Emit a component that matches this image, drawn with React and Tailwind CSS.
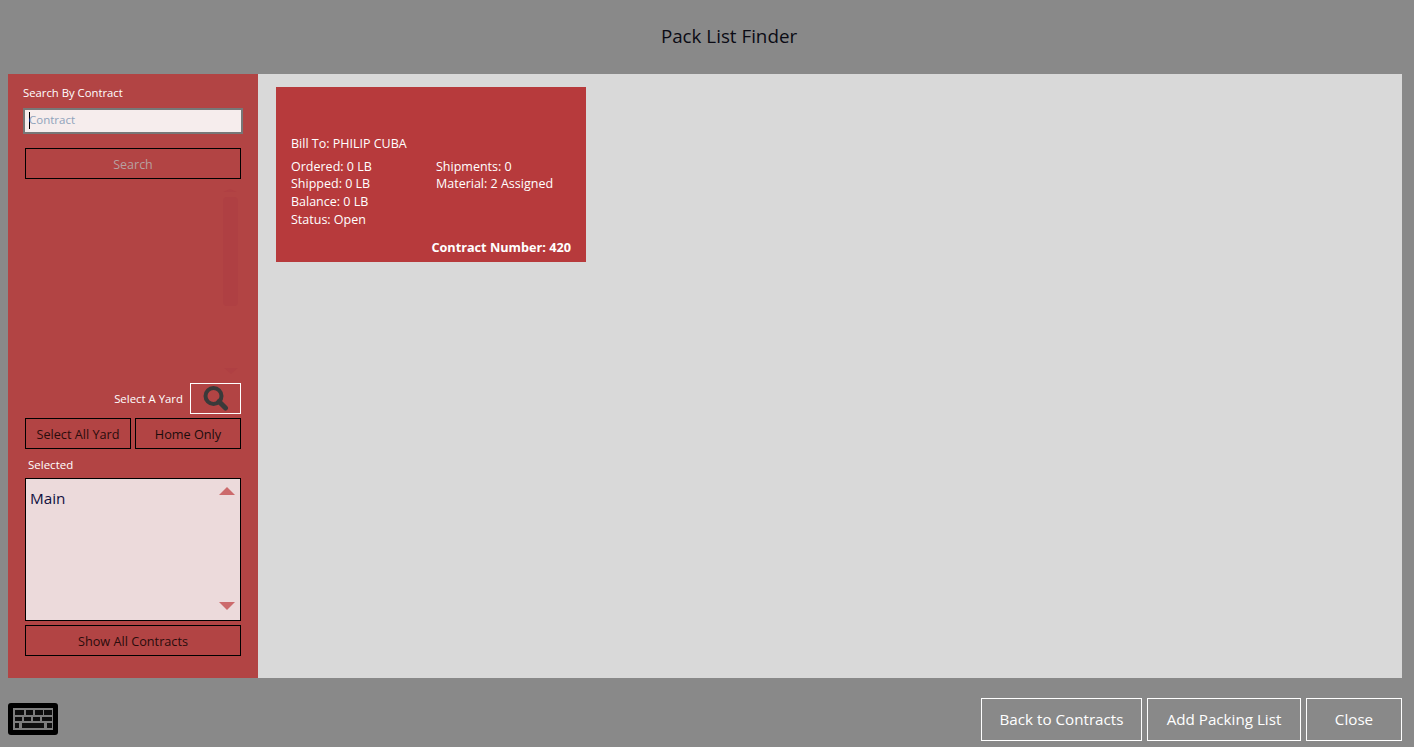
const font = { fontFamily: '"Open Sans", "Noto Sans", sans-serif' };

function Keyboard() {
  const keys = [
    [7, 7, 9, 5], [18, 7, 7, 5], [27, 7, 8, 5], [36, 7, 8, 5],
    [7, 14, 7, 4], [16, 14, 7, 4], [25, 14, 7, 4], [34, 14, 10, 4],
    [7, 20, 4, 5], [14, 20, 22, 5], [39, 20, 5, 5],
  ];
  return (
    <svg width="50" height="32" viewBox="0 0 50 32" className="block">
      <rect x="0" y="0" width="50" height="32" rx="3" fill="#000" />
      <rect x="5" y="5" width="40" height="22" fill="#7d7d7d" />
      {keys.map(([x, y, w, h], i) => (
        <rect key={i} x={x} y={y} width={w} height={h} fill="#0e0e0e" />
      ))}
    </svg>
  );
}

function Magnifier() {
  return (
    <svg width="26" height="26" viewBox="0 0 26 26" fill="none" className="block">
      <circle cx="10.5" cy="10" r="8" stroke="#3a3a3a" strokeWidth="4" />
      <path d="M16 15.5L22.5 22" stroke="#3a3a3a" strokeWidth="5" strokeLinecap="round" />
    </svg>
  );
}

export default function App() {
  return (
    <div className="w-[1414px] h-[747px] flex flex-col overflow-hidden bg-[#898989]" style={font}>
      <header className="h-[74px] shrink-0 flex items-center justify-center pl-[44px] pb-[2px] text-[18.8px] text-[#0b0b14]">
        Pack List Finder
      </header>
      <main className="h-[604px] shrink-0 flex ml-2 mr-3">
        <aside className="w-[250px] shrink-0 flex flex-col bg-[#b24444] pb-[22px]">
          <label className="block ml-[15px] mt-[10px] h-[18px] leading-[18px] text-[11.3px] text-white">Search By Contract</label>
          <div className="ml-[15px] mt-[6px] w-[220px] h-[26px] border-2 border-[#777] bg-[#f6eded] flex items-center pl-[4px] pb-[2px] text-[11.5px] text-[#8fa3bb]">
            <span className="w-px h-[17px] bg-black"></span>
            <span className="-ml-px">Contract</span>
          </div>
          <button className="ml-[17px] mt-[14px] w-[216px] h-[31px] pt-1 border border-black text-[12.5px] text-[#b8a0a0]">Search</button>
          <div className="flex-1 relative">
            <span className="absolute left-[215px] top-[10px] w-0 h-0 border-x-[7px] border-x-transparent border-b-[3px] border-b-[#af4043]"></span>
            <div className="absolute left-[215px] top-[18px] w-[15px] h-[109px] rounded bg-[#af4043]"></div>
            <span className="absolute left-[216px] top-[189px] w-0 h-0 border-x-[7px] border-x-transparent border-t-[6px] border-t-[#af4043]"></span>
          </div>
          <div className="flex items-center justify-end mr-[17px] h-[31px]">
            <span className="text-[11.4px] text-white mr-[7px]">Select A Yard</span>
            <button className="w-[51px] h-[31px] border border-white flex items-center justify-center">
              <Magnifier />
            </button>
          </div>
          <div className="flex ml-[17px] mt-[4px] w-[216px] gap-[4px]">
            <button className="w-[106px] h-[31px] pt-[2px] border border-black text-[12.7px] text-[#2a0c0c] whitespace-nowrap overflow-hidden">Select All Yard</button>
            <button className="w-[106px] h-[31px] pt-[2px] border border-black text-[12.7px] text-[#1a0c0c]">Home Only</button>
          </div>
          <div className="ml-[20px] mt-[8px] h-[15px] leading-[15px] text-[11.5px] text-white">Selected</div>
          <div className="ml-[17px] mt-[6px] w-[216px] h-[143px] border border-black bg-[#ecdadb] relative pl-[4px] pt-[7px] text-[15.3px] leading-[24px] text-[#101040]">
            Main
            <span className="absolute right-[5px] top-[8px] w-0 h-0 border-x-[8px] border-x-transparent border-b-[8px] border-b-[#cc6a6c]"></span>
            <span className="absolute right-[5px] bottom-[10px] w-0 h-0 border-x-[8px] border-x-transparent border-t-[8px] border-t-[#cc6a6c]"></span>
          </div>
          <button className="ml-[17px] mt-[4px] w-[216px] h-[31px] pt-[2px] border border-black text-[12.7px] text-[#2a0c0c]">Show All Contracts</button>
        </aside>
        <section className="flex-1 bg-[#d9d9d9] pl-[18px] pt-[13px]">
          <article className="w-[310px] h-[175px] bg-[#b73a3c] text-white text-[12.5px] pl-[15px] pr-[15px] pt-[48px] flex flex-col">
            <div className="h-[18px] leading-[18px]">Bill To: PHILIP CUBA</div>
            <div className="flex mt-[5px]">
              <div className="w-[145px]">
                <div className="h-[17px] leading-[17px]">Ordered: 0 LB</div>
                <div className="h-[18px] leading-[17px]">Shipped: 0 LB</div>
                <div className="h-[18px] leading-[18px]">Balance: 0 LB</div>
                <div className="h-[18px] leading-[18px]">Status: Open</div>
              </div>
              <div>
                <div className="h-[17px] leading-[17px]">Shipments: 0</div>
                <div className="h-[18px] leading-[17px]">Material: 2 Assigned</div>
              </div>
            </div>
            <div className="mt-auto mb-[5px] text-right font-bold text-[12.7px]">Contract Number: 420</div>
          </article>
        </section>
      </main>
      <footer className="flex-1 flex items-start justify-between pl-2 pr-3 pt-[20px]">
        <div className="mt-[5px]"><Keyboard /></div>
        <div className="flex gap-[5px] text-[15.2px] text-white">
          <button className="w-[161px] h-[43px] border border-white">Back to Contracts</button>
          <button className="w-[154px] h-[43px] border border-white">Add Packing List</button>
          <button className="w-[96px] h-[43px] border border-white">Close</button>
        </div>
      </footer>
    </div>
  );
}
